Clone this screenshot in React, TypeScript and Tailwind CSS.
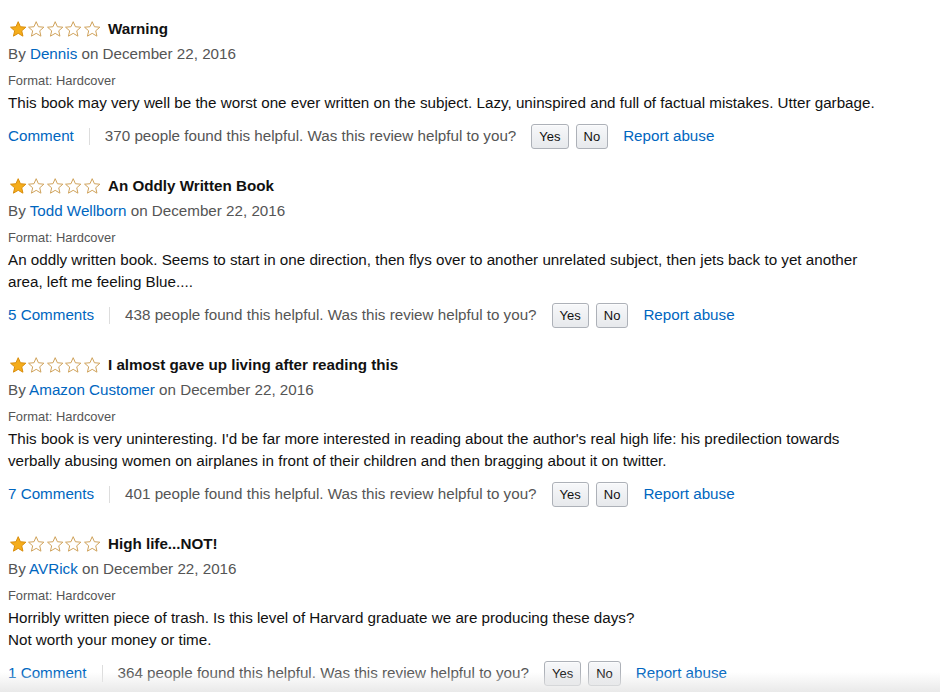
function Star({ filled }: { filled: boolean }) {
  return (
    <svg width="18.4" height="18.4" viewBox="0 0 24 24" className="shrink-0">
      <path
        d="M12 2.2l2.9 6.6 7.1.6-5.4 4.7 1.6 7-6.2-3.7-6.2 3.7 1.6-7L2 9.4l7.1-.6z"
        fill={filled ? "#f5ad1b" : "#fff"}
        stroke={filled ? "#d98d0b" : "#cfa25a"}
        strokeWidth="1.3"
        strokeLinejoin="round"
      />
    </svg>
  );
}

type Review = {
  title: string;
  author: string;
  body: string[];
  comments: string;
  helpful: number;
};

const reviews: Review[] = [
  {
    title: "Warning",
    author: "Dennis",
    body: [
      "This book may very well be the worst one ever written on the subject. Lazy, uninspired and full of factual mistakes. Utter garbage.",
    ],
    comments: "Comment",
    helpful: 370,
  },
  {
    title: "An Oddly Written Book",
    author: "Todd Wellborn",
    body: [
      "An oddly written book. Seems to start in one direction, then flys over to another unrelated subject, then jets back to yet another area, left me feeling Blue....",
    ],
    comments: "5 Comments",
    helpful: 438,
  },
  {
    title: "I almost gave up living after reading this",
    author: "Amazon Customer",
    body: [
      "This book is very uninteresting. I'd be far more interested in reading about the author's real high life: his predilection towards verbally abusing women on airplanes in front of their children and then bragging about it on twitter.",
    ],
    comments: "7 Comments",
    helpful: 401,
  },
  {
    title: "High life...NOT!",
    author: "AVRick",
    body: [
      "Horribly written piece of trash. Is this level of Harvard graduate we are producing these days?",
      "Not worth your money or time.",
    ],
    comments: "1 Comment",
    helpful: 364,
  },
];

function VoteButton({ label }: { label: string }) {
  return (
    <button className="h-[25px] px-[7px] rounded-[3px] border border-[#adb1b8] bg-gradient-to-b from-[#f7f8fa] to-[#e7e9ec] text-[13px] text-[#111] leading-none shadow-[inset_0_1px_0_rgba(255,255,255,0.6)]">
      {label}
    </button>
  );
}

function ReviewItem({ r }: { r: Review }) {
  return (
    <div className="mb-[26px]">
      <div className="flex items-center h-[22px]">
        <div className="flex items-center ml-[1px]">
          <Star filled />
          <Star filled={false} />
          <Star filled={false} />
          <Star filled={false} />
          <Star filled={false} />
        </div>
        <span className="ml-[7px] text-[15.2px] font-bold text-[#111]">{r.title}</span>
      </div>
      <div className="mt-[2px] leading-[22px] text-[15.2px] text-[#555]">
        By <span className="text-[#0066c0]">{r.author}</span> on December 22, 2016
      </div>
      <div className="mt-[7px] leading-[18px] text-[12.9px] text-[#555]">Format: Hardcover</div>
      <div className="mt-[2px] max-w-[880px] leading-[22px] text-[15.2px] text-[#111]">
        {r.body.map((line, i) => (
          <p key={i}>{line}</p>
        ))}
      </div>
      <div className="mt-[10px] h-[26px] flex items-center text-[15.2px]">
        <span className="text-[#0066c0]">{r.comments}</span>
        <span className="mx-[15px] w-px h-[17px] bg-[#ddd]" />
        <span className="text-[#555]">
          {r.helpful} people found this helpful. Was this review helpful to you?
        </span>
        <div className="ml-[15px] flex gap-[7px]">
          <VoteButton label="Yes" />
          <VoteButton label="No" />
        </div>
        <span className="ml-[15px] text-[#0066c0]">Report abuse</span>
      </div>
    </div>
  );
}

export default function App() {
  return (
    <div
      className="relative w-[940px] h-[692px] overflow-hidden bg-white pt-[18.6px] pl-[8px]"
      style={{ fontFamily: '"Liberation Sans", Arial, sans-serif' }}
    >
      {reviews.map((r) => (
        <ReviewItem key={r.title} r={r} />
      ))}
      <div className="pointer-events-none absolute inset-x-0 bottom-0 h-[20px] bg-gradient-to-b from-transparent to-[#e9e9e9]" />
    </div>
  );
}
